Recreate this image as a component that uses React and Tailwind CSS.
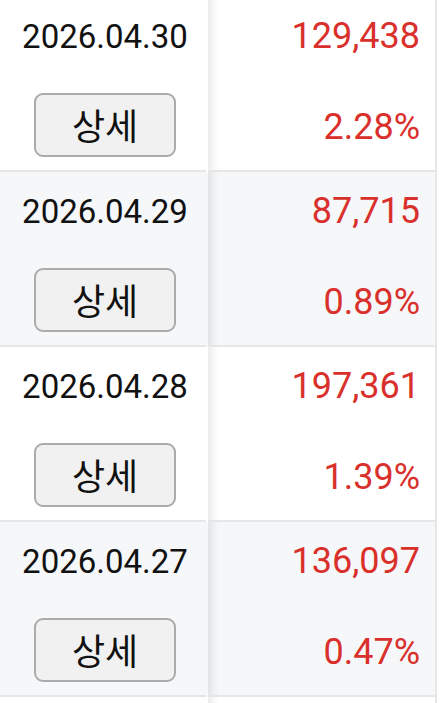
import React from "react";

const rows = [
  { date: "2026.04.30", value: "129,438", pct: "2.28%", alt: false },
  { date: "2026.04.29", value: "87,715", pct: "0.89%", alt: true },
  { date: "2026.04.28", value: "197,361", pct: "1.39%", alt: false },
  { date: "2026.04.27", value: "136,097", pct: "0.47%", alt: true },
];

export default function App() {
  return (
    <div
      className="w-[441px] h-[703px] overflow-hidden bg-white"
      style={{ fontFamily: "Roboto, 'Noto Sans CJK KR', sans-serif" }}
    >
      <div className="-mt-[3px] w-[437px] flex flex-col">
        {rows.map((r, i) => (
          <div
            key={i}
            className={`flex h-[175px] ${r.alt ? "bg-[#f6f7f9]" : "bg-white"}`}
          >
            <div className="w-[206px] pl-[4px] flex flex-col items-center border-b-2 border-[#e6e6e6]">
              <div className="pt-[20px] text-[33px] leading-[40px] text-[#111]">
                {r.date}
              </div>
              <button
                className="mt-[36px] h-[64px] w-[142px] rounded-[9px] border-2 border-[#ababab] bg-[#f1f1f1] flex items-center justify-center text-[36px] leading-none text-[#111] pb-[2px]"
                style={{ fontFamily: "'Noto Sans CJK KR', sans-serif" }}
              >
                상세
              </button>
            </div>
            <div className="flex-1 ml-[2px] flex flex-col items-end pr-[15px] border-b-2 border-r-2 border-[#e6e6e6] shadow-[inset_12px_0_8px_-8px_rgba(0,0,0,0.09)]">
              <div className="pt-[19px] text-[36px] leading-[40px] text-[#d9302c]">
                {r.value}
              </div>
              <div className="mt-[51px] text-[36px] leading-[40px] text-[#d9302c]">
                {r.pct}
              </div>
            </div>
          </div>
        ))}
        <div className="flex h-[175px] bg-white">
          <div className="w-[206px] border-b-2 border-[#e6e6e6]" />
          <div className="flex-1 ml-[2px] border-b-2 border-r-2 border-[#e6e6e6] shadow-[inset_12px_0_8px_-8px_rgba(0,0,0,0.09)]" />
        </div>
      </div>
    </div>
  );
}
